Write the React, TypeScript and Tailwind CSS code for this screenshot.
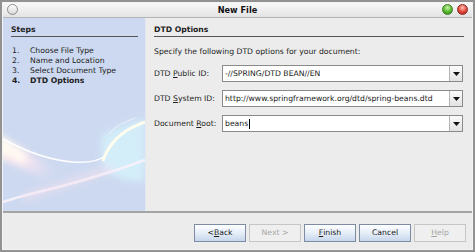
import React from "react";

const steps = [
  { n: "1.", label: "Choose File Type" },
  { n: "2.", label: "Name and Location" },
  { n: "3.", label: "Select Document Type" },
  { n: "4.", label: "DTD Options", current: true },
];

function Swoosh() {
  return (
    <svg className="absolute inset-0" width="142" height="192" viewBox="0 0 142 192">
      <defs>
        <filter id="blur4" x="-50%" y="-50%" width="200%" height="200%">
          <feGaussianBlur stdDeviation="3.5" />
        </filter>
        <filter id="blur1" x="-50%" y="-50%" width="200%" height="200%">
          <feGaussianBlur stdDeviation="0.7" />
        </filter>
        <linearGradient id="glow" x1="0" y1="0" x2="1" y2="0.8">
          <stop offset="0" stopColor="#fffde8" />
          <stop offset="0.5" stopColor="#fde6ef" />
          <stop offset="1" stopColor="#e8def4" stopOpacity="0" />
        </linearGradient>
      </defs>
      {/* cyan haze on the right */}
      <path d="M98 118 C112 110 130 104 142 100 L142 162 C128 166 112 160 100 150 Z" fill="#d4f0fb" opacity="0.9" filter="url(#blur4)" />
      {/* pink band */}
      <path d="M-6 116 C12 126 32 140 56 154 L46 166 C26 152 8 144 -6 140 Z" fill="url(#glow)" filter="url(#blur4)" />
      <path d="M-4 124 C6 130 14 136 22 142" stroke="#fffff4" strokeWidth="8" fill="none" opacity="0.9" filter="url(#blur4)" />
      {/* thin white curve */}
      <path d="M0 121 C20 132 45 142 70 144 C86 145 96 143 102 138" stroke="#ffffff" strokeWidth="1.6" fill="none" opacity="0.95" filter="url(#blur1)" />
      {/* bright arc */}
      <path d="M100 143 C104 130 114 118 128 110 C134 107 139 105 142 104" stroke="#fffdee" strokeWidth="3" fill="none" opacity="1" filter="url(#blur1)" />
      {/* lower sweep */}
      <path d="M0 184 C24 176 50 171 74 164 C98 157 120 150 142 142" stroke="#f8f2fb" strokeWidth="2.5" fill="none" opacity="0.9" filter="url(#blur1)" />
      <path d="M20 180 C50 170 80 160 110 150" stroke="#f6e2f0" strokeWidth="7" fill="none" opacity="0.6" filter="url(#blur4)" />
      <path d="M106 116 C112 108 122 104 132 100" stroke="#ffffff" strokeWidth="1" fill="none" opacity="0.6" filter="url(#blur1)" />
    </svg>
  );
}

function Combo({ value, caret }: { value: string; caret?: boolean }) {
  return (
    <div className="flex h-[17px] w-[241px] border border-[#8a8a8a] bg-white">
      <div className="flex flex-1 items-center pl-[2px] text-[#1a1a1a]">
        {value}
        {caret && <span className="ml-[1px] inline-block h-[10px] w-[1px] bg-black" />}
      </div>
      <div className="flex w-[13px] items-center justify-center border-l border-[#b4b4b4] bg-gradient-to-b from-[#fbfbfb] to-[#e2e2e2]">
        <svg width="7" height="4" viewBox="0 0 7 4">
          <path d="M0 0 H7 L3.5 4 Z" fill="#111" />
        </svg>
      </div>
    </div>
  );
}

function Btn({ children, disabled }: { children: React.ReactNode; disabled?: boolean }) {
  return (
    <div
      className={
        disabled
          ? "flex h-[18px] w-[52px] items-center justify-center border border-[#c6c6c6] bg-[#efefef] text-[#a6a6a6]"
          : "flex h-[18px] w-[52px] items-center justify-center border border-[#7e8ca3] bg-gradient-to-b from-[#fdfeff] via-[#e6eef8] to-[#c6d6ec] text-[#1a1a1a]"
      }
    >
      {children}
    </div>
  );
}

export default function App() {
  return (
    <div className="h-[252px] w-[475px] overflow-hidden bg-[#929292] p-[2px] font-['DejaVu_Sans',sans-serif] text-[7.7px] leading-[10px] text-[#1e1e1e]">
      <div className="flex h-full flex-col border border-[#f4f4f4] bg-[#ececec]">
        {/* title bar */}
        <div className="relative flex h-[15px] items-center justify-center border-b border-[#b4b4b4] bg-gradient-to-b from-[#f8f8f8] to-[#e4e4e4]">
          <div className="absolute left-[4px] top-[1px] h-[11px] w-[11px] rounded-full border border-[#8c8c8c] bg-gradient-to-b from-[#ffffff] to-[#d8d8d8]" />
          <span className="text-[8.2px] font-bold text-[#111]">New File</span>
          <div className="absolute right-[19px] top-[1px] h-[11px] w-[11px] rounded-full border border-[#3f7a2a] bg-[radial-gradient(circle_at_50%_30%,#c8f5a8,#54b82c_55%,#2f7e17)]" />
          <div className="absolute right-[4px] top-[1px] h-[11px] w-[11px] rounded-full border border-[#8a2a22] bg-[radial-gradient(circle_at_50%_30%,#ffc2b6,#e0463a_55%,#a3201a)]" />
        </div>

        {/* body */}
        <div className="flex flex-1">
          <div className="relative w-[143px] overflow-hidden border-r border-[#e4e8f0] bg-[#cdd9f0] pl-[8px] pr-[7px] pt-[7px]">
            <Swoosh />
            <div className="relative">
              <div className="border-b border-[#555] pb-[1px] font-bold">Steps</div>
              <div className="mt-[9px] flex flex-col">
                {steps.map((s) => (
                  <div key={s.n} className={s.current ? "flex font-bold" : "flex"}>
                    <span className="w-[19px] pl-[1px]">{s.n}</span>
                    <span>{s.label}</span>
                  </div>
                ))}
              </div>
            </div>
          </div>

          <div className="flex-1 pl-[8px] pr-[8px] pt-[7px]">
            <div className="border-b border-[#555] pb-[1px] font-bold">DTD Options</div>
            <div className="mt-[10px]">Specify the following DTD options for your document:</div>
            <div className="mt-[8px] flex flex-col gap-[8px]">
              <div className="flex items-center">
                <span className="w-[68px]">
                  DTD <u>P</u>ublic ID:
                </span>
                <Combo value="-//SPRING/DTD BEAN//EN" />
              </div>
              <div className="flex items-center">
                <span className="w-[68px]">
                  DTD <u>S</u>ystem ID:
                </span>
                <Combo value="http://www.springframework.org/dtd/spring-beans.dtd" />
              </div>
              <div className="flex items-center">
                <span className="w-[68px]">
                  Document <u>R</u>oot:
                </span>
                <Combo value="beans" caret />
              </div>
            </div>
          </div>
        </div>

        {/* button bar */}
        <div className="flex h-[38px] items-center justify-end gap-[3px] border-t-2 border-[#a4a4a4] pr-[6px] pt-[3px]">
          <Btn>
            &lt; <u>B</u>ack
          </Btn>
          <Btn disabled>Next &gt;</Btn>
          <Btn>
            <u>F</u>inish
          </Btn>
          <Btn>Cancel</Btn>
          <Btn disabled>
            <u>H</u>elp
          </Btn>
        </div>
      </div>
    </div>
  );
}
